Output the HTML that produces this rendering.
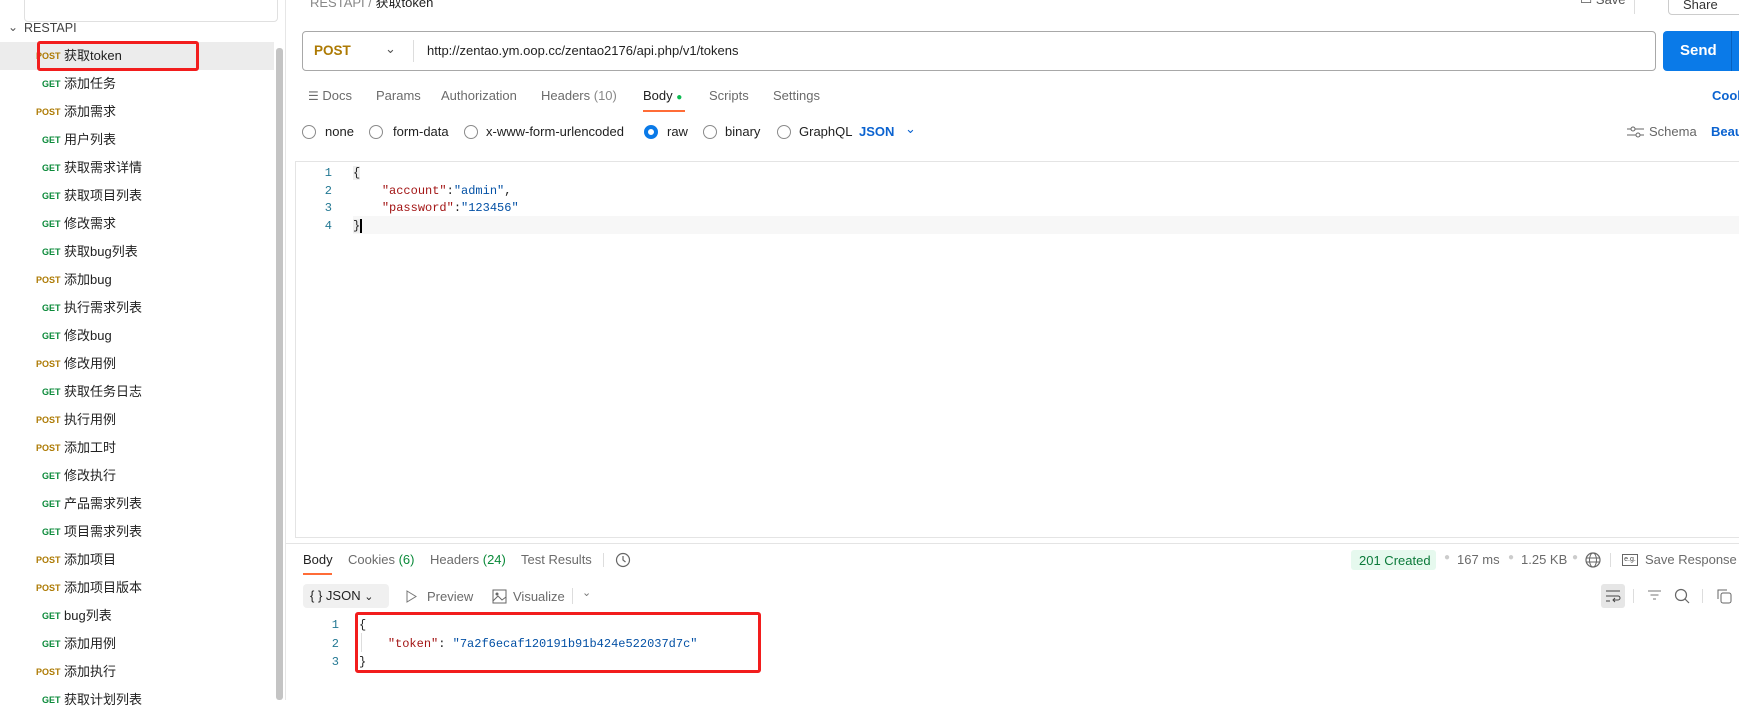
<!DOCTYPE html>
<html><head><meta charset="utf-8"><style>
*{margin:0;padding:0;box-sizing:border-box}
body{width:1739px;height:700px;overflow:hidden;background:#fff;font-family:"Liberation Sans","Noto Sans CJK SC",sans-serif;color:#212121;position:relative;font-size:13px}
.a{position:absolute;white-space:nowrap}
.side{position:absolute;left:0;top:0;width:286px;height:700px;background:#fff;border-right:1px solid #e6e6e6}
.it{position:absolute;left:0;width:274px;height:28px;font-size:13px;line-height:28px}
.m{position:absolute;font-size:9px;font-weight:bold;top:0}
.g{color:#0b8a3a;left:42px}.p{color:#ad7a03;left:36px}
.n{position:absolute;left:64px;color:#212121}
.mono{font-family:"Liberation Mono","DejaVu Sans Mono",monospace;font-size:12px}
.tab{position:absolute;top:88px;font-size:13px;color:#6b6b6b}
.rad{position:absolute;top:125px;width:14px;height:14px;border:1px solid #8a8a8a;border-radius:50%}
.rl{position:absolute;top:125px;font-size:13px;color:#212121;line-height:14px}
.k{color:#a31515}.s{color:#0451a5}.ln{color:#237893}
</style></head><body>
<div class="side">
  <div class="a" style="left:24px;top:-10px;width:254px;height:32px;border:1px solid #e0e0e0;border-radius:4px"></div>
  <div class="a" style="left:8px;top:20px;font-size:12px;color:#555">&#8964;</div>
  <div class="a" style="left:24px;top:21px;font-size:12.5px;color:#444">RESTAPI</div>
  <div class="a" style="left:0;top:42px;width:274px;height:28px;background:#ececec"></div>
  <div class="a" style="left:276px;top:48px;width:7px;height:652px;background:#c4c4c4;border-radius:3px"></div>
  <div class="it" style="top:42px"><span class="m p">POST</span><span class="n">获取token</span></div>
  <div class="it" style="top:70px"><span class="m g">GET</span><span class="n">添加任务</span></div>
  <div class="it" style="top:98px"><span class="m p">POST</span><span class="n">添加需求</span></div>
  <div class="it" style="top:126px"><span class="m g">GET</span><span class="n">用户列表</span></div>
  <div class="it" style="top:154px"><span class="m g">GET</span><span class="n">获取需求详情</span></div>
  <div class="it" style="top:182px"><span class="m g">GET</span><span class="n">获取项目列表</span></div>
  <div class="it" style="top:210px"><span class="m g">GET</span><span class="n">修改需求</span></div>
  <div class="it" style="top:238px"><span class="m g">GET</span><span class="n">获取bug列表</span></div>
  <div class="it" style="top:266px"><span class="m p">POST</span><span class="n">添加bug</span></div>
  <div class="it" style="top:294px"><span class="m g">GET</span><span class="n">执行需求列表</span></div>
  <div class="it" style="top:322px"><span class="m g">GET</span><span class="n">修改bug</span></div>
  <div class="it" style="top:350px"><span class="m p">POST</span><span class="n">修改用例</span></div>
  <div class="it" style="top:378px"><span class="m g">GET</span><span class="n">获取任务日志</span></div>
  <div class="it" style="top:406px"><span class="m p">POST</span><span class="n">执行用例</span></div>
  <div class="it" style="top:434px"><span class="m p">POST</span><span class="n">添加工时</span></div>
  <div class="it" style="top:462px"><span class="m g">GET</span><span class="n">修改执行</span></div>
  <div class="it" style="top:490px"><span class="m g">GET</span><span class="n">产品需求列表</span></div>
  <div class="it" style="top:518px"><span class="m g">GET</span><span class="n">项目需求列表</span></div>
  <div class="it" style="top:546px"><span class="m p">POST</span><span class="n">添加项目</span></div>
  <div class="it" style="top:574px"><span class="m p">POST</span><span class="n">添加项目版本</span></div>
  <div class="it" style="top:602px"><span class="m g">GET</span><span class="n">bug列表</span></div>
  <div class="it" style="top:630px"><span class="m g">GET</span><span class="n">添加用例</span></div>
  <div class="it" style="top:658px"><span class="m p">POST</span><span class="n">添加执行</span></div>
  <div class="it" style="top:686px"><span class="m g">GET</span><span class="n">获取计划列表</span></div>
  <div class="a" style="left:37px;top:41px;width:162px;height:30px;border:3px solid #f21d1d;border-radius:3px"></div>
</div>

<div class="a" style="left:310px;top:-8px;font-size:13px;color:#888">RESTAPI / <span style="color:#222">获取token</span></div>
<div class="a" style="left:1580px;top:-8px;font-size:13px;color:#555">▭ Save</div>
<div class="a" style="left:1634px;top:-4px;width:1px;height:18px;background:#ddd"></div>
<div class="a" style="left:1668px;top:-10px;width:80px;height:25px;border:1px solid #ccc;border-radius:4px;font-size:13px;padding:6px 0 0 14px;color:#333">Share</div>

<div class="a" style="left:302px;top:31px;width:1354px;height:40px;border:1px solid #a8a8a8;border-radius:4px"></div>
<div class="a" style="left:314px;top:43px;font-size:13.5px;font-weight:bold;color:#ad7a03">POST</div>
<div class="a" style="left:385px;top:41px;font-size:13px;color:#555">&#8964;</div>
<div class="a" style="left:413px;top:40px;width:1px;height:22px;background:#ddd"></div>
<div class="a" style="left:427px;top:43px;font-size:13px;color:#222">http://zentao.ym.oop.cc/zentao2176/api.php/v1/tokens</div>
<div class="a" style="left:1663px;top:31px;width:90px;height:40px;background:#0a7ae8;border-radius:4px;color:#fff;font-weight:bold;font-size:15px;padding:11px 0 0 17px">Send</div>
<div class="a" style="left:1731px;top:31px;width:1px;height:40px;background:#0561c0"></div>

<div class="tab" style="left:308px"><span style="font-size:12px">☰</span> Docs</div>
<div class="tab" style="left:376px">Params</div>
<div class="tab" style="left:441px">Authorization</div>
<div class="tab" style="left:541px">Headers <span style="color:#888">(10)</span></div>
<div class="tab" style="left:643px;color:#212121">Body <span style="color:#0cbb52;font-size:10px">●</span></div>
<div class="a" style="left:643px;top:110px;width:42px;height:2px;background:#ff6c37"></div>
<div class="tab" style="left:709px">Scripts</div>
<div class="tab" style="left:773px">Settings</div>
<div class="tab" style="left:1712px;color:#0b63d0;font-weight:bold">Cookies</div>

<div class="rad" style="left:302px"></div><div class="rl" style="left:325px">none</div>
<div class="rad" style="left:369px"></div><div class="rl" style="left:393px">form-data</div>
<div class="rad" style="left:464px"></div><div class="rl" style="left:486px">x-www-form-urlencoded</div>
<div class="rad" style="left:644px;border:4px solid #0a7ae8"></div><div class="rl" style="left:667px">raw</div>
<div class="rad" style="left:703px"></div><div class="rl" style="left:725px">binary</div>
<div class="rad" style="left:777px"></div><div class="rl" style="left:799px">GraphQL</div>
<div class="rl" style="left:859px;color:#0b63d0;font-weight:bold">JSON</div>
<div class="rl" style="left:905px;color:#0b63d0;top:122px">&#8964;</div>
<svg class="a" style="left:1627px;top:126px" width="17" height="12" viewBox="0 0 17 12"><path d="M0 3h17M0 9h17" stroke="#666"/><circle cx="6" cy="3" r="2" fill="#fff" stroke="#666"/><circle cx="11" cy="9" r="2" fill="#fff" stroke="#666"/></svg>
<div class="rl" style="left:1649px;color:#666">Schema</div>
<div class="rl" style="left:1711px;color:#0b63d0;font-weight:bold">Beautify</div>

<div class="a" style="left:295px;top:161px;width:1460px;height:377px;border-top:1px solid #e4e4e4;border-left:1px solid #e4e4e4;border-bottom:1px solid #e4e4e4"></div>
<div class="a" style="left:353px;top:216px;width:1390px;height:18px;background:#f7f7f7"></div>
<div class="a mono ln" style="left:322px;top:165px;line-height:17.5px;text-align:right;width:10px">1<br>2<br>3<br>4</div>
<div class="a mono" style="left:353px;top:165px;line-height:17.5px"><span style="background:#eee">{</span><br>&nbsp;&nbsp;&nbsp;&nbsp;<span class="k">"account"</span>:<span class="s">"admin"</span>,<br>&nbsp;&nbsp;&nbsp;&nbsp;<span class="k">"password"</span>:<span class="s">"123456"</span><br><span style="background:#eee;border-right:2px solid #000">}</span></div>

<div class="a" style="left:286px;top:543px;width:1460px;height:1px;background:#e4e4e4"></div>
<div class="a" style="left:303px;top:552px;font-size:13px;color:#212121">Body</div>
<div class="a" style="left:303px;top:573px;width:29px;height:2px;background:#ff6c37"></div>
<div class="a" style="left:348px;top:552px;font-size:13px;color:#6b6b6b">Cookies <span style="color:#0b8a3a">(6)</span></div>
<div class="a" style="left:430px;top:552px;font-size:13px;color:#6b6b6b">Headers <span style="color:#0b8a3a">(24)</span></div>
<div class="a" style="left:521px;top:552px;font-size:13px;color:#6b6b6b">Test Results</div>
<div class="a" style="left:603px;top:553px;width:1px;height:14px;background:#ddd"></div>
<svg class="a" style="left:615px;top:552px" width="16" height="16" viewBox="0 0 16 16"><circle cx="8" cy="8" r="6.5" fill="none" stroke="#666" stroke-width="1.2"/><path d="M8 4v4l2.5 2" fill="none" stroke="#666" stroke-width="1.2"/></svg>

<div class="a" style="left:1351px;top:550px;width:85px;height:20px;background:#e6f9ee;border-radius:3px;color:#0b7a3a;font-size:13px;padding:3px 0 0 8px">201 Created</div>
<div class="a" style="left:1444px;top:552px;color:#ccc;font-size:10px">●</div>
<div class="a" style="left:1457px;top:552px;color:#6b6b6b;font-size:13px">167 ms</div>
<div class="a" style="left:1508px;top:552px;color:#ccc;font-size:10px">●</div>
<div class="a" style="left:1521px;top:552px;color:#6b6b6b;font-size:13px">1.25 KB</div>
<div class="a" style="left:1572px;top:552px;color:#ccc;font-size:10px">●</div>
<svg class="a" style="left:1585px;top:552px" width="16" height="16" viewBox="0 0 16 16"><circle cx="8" cy="8" r="7" fill="none" stroke="#666" stroke-width="1.2"/><ellipse cx="8" cy="8" rx="3.5" ry="7" fill="none" stroke="#666"/><path d="M1 6h14M1 10h14" stroke="#666"/></svg>
<div class="a" style="left:1610px;top:553px;width:1px;height:14px;background:#ddd"></div>
<div class="a" style="left:1622px;top:554px;width:16px;height:12px;border:1px solid #666;font-size:7px;color:#444;text-align:center;line-height:10px">e.g.</div>
<div class="a" style="left:1645px;top:552px;color:#6b6b6b;font-size:13px">Save Response</div>

<div class="a" style="left:303px;top:584px;width:86px;height:24px;background:#f0f0f0;border-radius:4px;font-size:13px;padding:4px 0 0 7px;color:#222">{ }&nbsp;JSON <span style="font-size:11px">&#8964;</span></div>
<svg class="a" style="left:405px;top:590px" width="12" height="13" viewBox="0 0 12 13"><path d="M2 1l9 5.5-9 5.5z" fill="none" stroke="#777"/></svg>
<div class="a" style="left:427px;top:589px;font-size:13px;color:#6b6b6b">Preview</div>
<svg class="a" style="left:492px;top:589px" width="15" height="15" viewBox="0 0 15 15"><rect x="1" y="1" width="13" height="13" fill="none" stroke="#666"/><circle cx="5" cy="5" r="1.5" fill="#666"/><path d="M1 12l5-5 4 4 4-3" fill="none" stroke="#666"/></svg>
<div class="a" style="left:513px;top:589px;font-size:13px;color:#6b6b6b">Visualize</div>
<div class="a" style="left:572px;top:588px;width:1px;height:16px;background:#ddd"></div>
<div class="a" style="left:582px;top:586px;font-size:11px;color:#777">&#8964;</div>

<div class="a" style="left:1601px;top:584px;width:24px;height:24px;background:#e6e6e6;border-radius:3px"></div>
<svg class="a" style="left:1605px;top:589px" width="16" height="14" viewBox="0 0 16 14"><path d="M1 2h14M1 7h12a2 2 0 0 1 0 4H8M10 9l-2 2 2 2M1 12h4" fill="none" stroke="#444"/></svg>
<div class="a" style="left:1633px;top:589px;width:1px;height:14px;background:#ddd"></div>
<svg class="a" style="left:1647px;top:589px" width="15" height="13" viewBox="0 0 15 13"><path d="M1 2h13M3.5 6h8M6 10h3" stroke="#777"/></svg>
<svg class="a" style="left:1674px;top:588px" width="16" height="16" viewBox="0 0 16 16"><circle cx="7" cy="7" r="5.5" fill="none" stroke="#666" stroke-width="1.2"/><path d="M11 11l4 4" stroke="#666" stroke-width="1.2"/></svg>
<div class="a" style="left:1702px;top:589px;width:1px;height:14px;background:#ddd"></div>
<svg class="a" style="left:1716px;top:588px" width="16" height="16" viewBox="0 0 16 16"><path d="M2 11V2h9" fill="none" stroke="#666"/><rect x="5" y="5" width="10" height="10" rx="2" fill="none" stroke="#666"/></svg>

<div class="a mono ln" style="left:327px;top:616px;line-height:18.5px;text-align:right;width:12px">1<br>2<br>3</div>
<div class="a" style="left:361px;top:633px;width:1px;height:19px;background:#ddd"></div>
<div class="a mono" style="left:359px;top:616px;line-height:18.5px">{<br>&nbsp;&nbsp;&nbsp;&nbsp;<span class="k">"token"</span>: <span class="s">"7a2f6ecaf120191b91b424e522037d7c"</span><br>}</div>
<div class="a" style="left:355px;top:612px;width:406px;height:61px;border:3px solid #f21d1d;border-radius:3px"></div>
</body></html>
